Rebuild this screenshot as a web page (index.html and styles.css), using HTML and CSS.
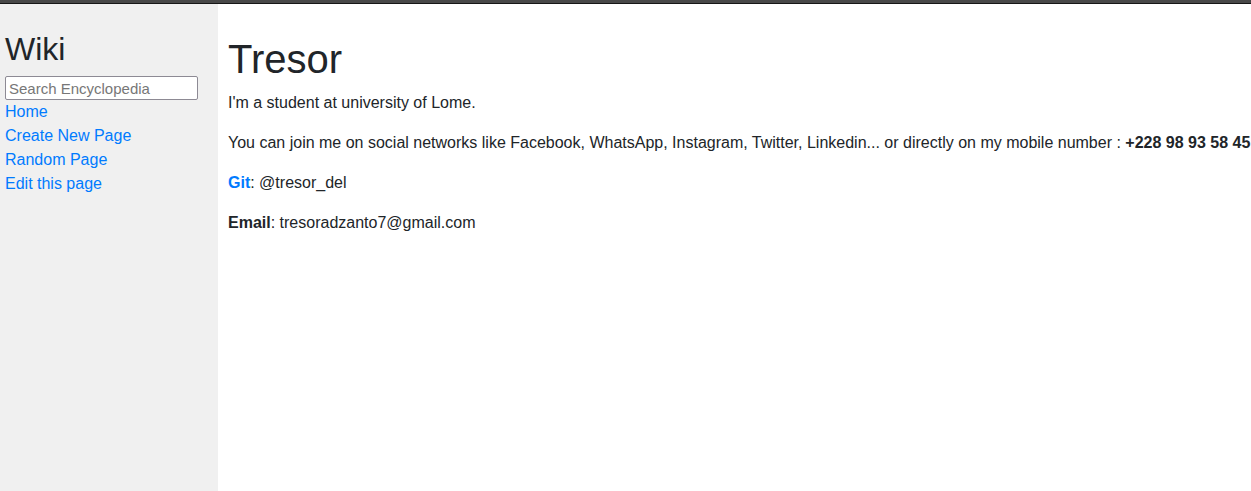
FILE: index.html
```html
<!DOCTYPE html>
<html lang="en">
<head>
<meta charset="utf-8">
<title>Tresor</title>
<link rel="stylesheet" href="styles.css">
</head>
<body>
<div class="topbar"></div>
<div class="layout">
  <aside class="sidebar">
    <h2 class="brand">Wiki</h2>
    <form class="search">
      <input class="search-input" type="text" name="q" placeholder="Search Encyclopedia">
    </form>
    <nav class="nav">
      <a href="#">Home</a>
      <a href="#">Create New Page</a>
      <a href="#">Random Page</a>
      <a href="#">Edit this page</a>
    </nav>
  </aside>
  <main class="main">
    <h1 class="title">Tresor</h1>
    <p>I'm a student at university of Lome.</p>
    <p class="nowrap">You can join me on social networks like Facebook, WhatsApp, Instagram, Twitter, Linkedin... or directly on my mobile number : <strong>+228 98 93 58 45</strong></p>
    <p><a href="#" class="strong-link">Git</a>: @tresor_del</p>
    <p><strong>Email</strong>: tresoradzanto7@gmail.com</p>
  </main>
</div>
</body>
</html>
```

FILE: styles.css
```css
* { box-sizing: border-box; }
html, body {
  margin: 0;
  height: 100%;
}
body {
  font-family: "Liberation Sans", Arial, sans-serif;
  font-size: 16px;
  line-height: 1.5;
  color: #212529;
  background: #fff;
  overflow: hidden;
}
a { color: #007bff; text-decoration: none; }
strong { font-weight: bold; }

.topbar {
  height: 4px;
  background: #484848;
  border-bottom: 1px solid #161616;
}
.layout {
  display: flex;
  height: calc(100vh - 4px);
}
.sidebar {
  width: 218px;
  flex: 0 0 218px;
  background: #f0f0f0;
  padding: 26px 5px 0;
}
.brand {
  margin: 0 0 8px;
  font-size: 32px;
  font-weight: 500;
  line-height: 1.2;
}
.search { margin: 0; }
.search-input {
  display: block;
  width: 193px;
  height: 24px;
  margin: 0;
  padding: 1px 3px;
  border: 1px solid #8d8a94;
  border-radius: 2px;
  background: #fff;
  font-family: "Liberation Sans", Arial, sans-serif;
  font-size: 15px;
  color: #212529;
}
.search-input::placeholder { color: #777; }
.nav {
  display: flex;
  flex-direction: column;
}
.main {
  flex: 1;
  min-width: 0;
  overflow: hidden;
  padding: 31px 0 0 10px;
}
.title {
  margin: 0 0 8px;
  font-size: 40px;
  font-weight: 500;
  line-height: 1.2;
}
.main p { margin: 0 0 16px; }
.nowrap { white-space: nowrap; }
.strong-link { font-weight: bold; }
```
